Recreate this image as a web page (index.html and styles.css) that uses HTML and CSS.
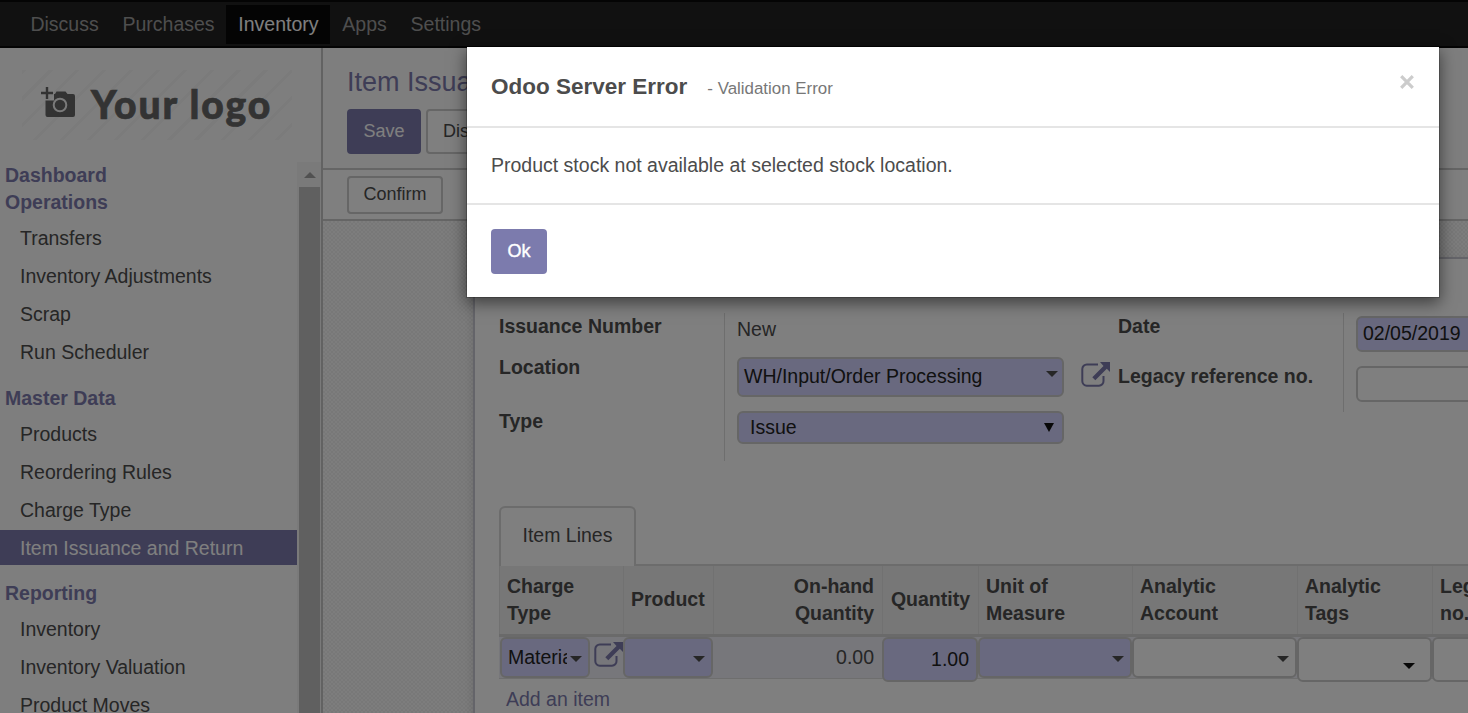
FILE: index.html
```html
<!DOCTYPE html>
<html lang="en">
<head>
<meta charset="utf-8">
<title>Item Issuance - Odoo</title>
<link rel="stylesheet" href="styles.css">
</head>
<body>
<svg class="defs" width="0" height="0">
  <symbol id="external" viewBox="0 0 29 26">
    <path d="M17 2.500H6A4.500 4.500 0 0 0 1.300 7v12A4.500 4.500 0 0 0 6 23.700h12A4.500 4.500 0 0 0 22.500 19v-5" fill="none" stroke="currentColor" stroke-width="2"/>
    <path d="M19 0h10v10l-3.200-3.200L14.300 18.300l-3-3L22.500 4z" fill="currentColor"/>
  </symbol>
</svg>
<div class="app">
  <nav class="topbar">
    <a class="menu">Discuss</a><a class="menu">Purchases</a><a class="menu active">Inventory</a><a class="menu">Apps</a><a class="menu">Settings</a>
  </nav>
  <div class="body">
    <aside class="sidebar">
      <div class="logo">
        <svg class="camera" viewBox="0 0 34 31" width="34" height="31">
          <path d="M6 0v12M0 6h12" stroke="#666" stroke-width="2.400"/>
          <path d="M14 7l1.500-2.500h9L26.500 7H32q2 0 2 2v19q0 2-2 2H6.500q-2 0-2-2V13.500H13V7z" fill="#666"/>
          <circle cx="19" cy="18" r="6.300" fill="#666" stroke="#f5f5f5" stroke-width="2"/>
        </svg>
        <span class="logo-text">Your logo</span>
      </div>
      <div class="side-scroll">
        <div class="side-menu">
          <h4 class="low">Dashboard</h4>
          <h4 class="low">Operations</h4>
          <ul class="low"><li>Transfers</li><li>Inventory Adjustments</li><li>Scrap</li><li>Run Scheduler</li></ul>
          <h4 class="low">Master Data</h4>
          <ul class="low"><li>Products</li><li>Reordering Rules</li><li>Charge Type</li><li class="selected">Item Issuance and Return</li></ul>
          <h4>Reporting</h4>
          <ul><li>Inventory</li><li>Inventory Valuation</li><li>Product Moves</li></ul>
        </div>
        <div class="scrollbar"><i class="up"></i><i class="thumb"></i></div>
      </div>
    </aside>
    <main class="content">
      <header class="panel">
        <h1>Item Issuance and Return</h1>
        <div class="buttons"><button class="btn primary">Save</button><button class="btn">Discard</button></div>
      </header>
      <div class="statusbar"><button class="btn small">Confirm</button></div>
      <div class="sheet-bg">
        <section class="sheet">
          <div class="groups">
            <div class="group g1">
              <div class="labels"><b>Issuance Number</b><b>Location</b><b>Type</b></div>
              <div class="values">
                <span class="static">New</span>
                <div class="field loc req">WH/Input/Order Processing<i class="caret"></i></div>
                <div class="field type req">Issue<i class="tri"></i></div>
              </div>
              <svg class="ext" width="29" height="26"><use href="#external"/></svg>
            </div>
            <div class="group g2">
              <div class="labels"><b>Date</b><b>Legacy reference no.</b></div>
              <div class="values">
                <div class="field date req">02/05/2019</div>
                <div class="field date"></div>
              </div>
            </div>
          </div>
          <div class="tabs"><div class="tab">Item Lines</div></div>
          <div class="row head">
            <div>Charge<br>Type</div><div class="single">Product</div><div class="num">On-hand<br>Quantity</div><div class="num single">Quantity</div><div>Unit of<br>Measure</div><div>Analytic<br>Account</div><div>Analytic<br>Tags</div><div>Legacy reference<br>no.</div>
          </div>
          <div class="row line">
            <div class="charge"><div class="field req"><span class="clip">Material</span><i class="caret"></i></div><svg width="29" height="26"><use href="#external"/></svg></div>
            <div class="field req"><i class="caret"></i></div>
            <div class="onhand">0.00</div>
            <div class="field req tall qty">1.00</div>
            <div class="field req"><i class="caret"></i></div>
            <div class="field"><i class="caret"></i></div>
            <div class="field tall tags"><i class="caret dark"></i></div>
            <div class="field tall"></div>
          </div>
          <a class="add">Add an item</a>
        </section>
      </div>
    </main>
  </div>
</div>
<div class="backdrop"></div>
<div class="modal">
  <div class="modal-head"><span class="title">Odoo Server Error</span><span class="sub">- Validation Error</span>
    <svg class="close" width="14" height="14" viewBox="0 0 14 14"><path d="M1.200 1.200l11.600 11.600M12.800 1.200L1.200 12.800" stroke="#ccc" stroke-width="3.200"/></svg></div>
  <div class="modal-body">Product stock not available at selected stock location.</div>
  <div class="modal-foot"><button class="ok">Ok</button></div>
</div>
</body>
</html>
```

FILE: styles.css
```css
* { box-sizing: border-box; }
body { margin: 0; height: 713px; overflow: hidden; position: relative; font: 19.5px/27px "Liberation Sans", Arial, sans-serif; color: #4c4c4c; background: #fff; }
h1, h4, ul { margin: 0; padding: 0; }
li { list-style: none; }
button { font: inherit; white-space: nowrap; }
.defs { display: block; }
.app { height: 713px; overflow: hidden; }
.topbar { height: 48px; background: #222; border-top: 2px solid #080808; border-bottom: 2px solid #080808; padding: 3px 0 0 18.5px; display: flex; }
.menu { height: 39px; line-height: 38px; padding: 0 11.9px; color: #9d9d9d; }
.menu.active { background: #080808; color: #fff; }
.body { display: flex; height: 665px; }
.sidebar { width: 323px; flex: none; background: #fcfcfc; border-right: 2px solid #c4c4c4; }
.logo { margin: 22px 0 0 22px; width: 270px; height: 70px; padding: 17px 0 0 19px; display: flex; gap: 16px; background: repeating-linear-gradient(135deg, #f7f7f7 0 3px, #fcfcfc 3px 19px); }
.camera { flex: none; }
.logo-text { font: 900 39px/34px Lato, sans-serif; color: #666; white-space: nowrap; letter-spacing: 1.9px; -webkit-text-stroke: .7px #666; }
.side-scroll { display: flex; height: 551px; margin-top: 22px; overflow: hidden; }
.side-menu { width: 297px; margin-top: -1px; }
.side-menu h4 { font-size: 19.5px; line-height: 27px; height: 27px; padding-left: 5px; color: #7c7bad; }
.side-menu h4.low { line-height: 29px; }
.side-menu ul { margin: 5px 0 15px; display: flex; flex-direction: column; gap: 3px; }
.side-menu li { height: 35px; line-height: 35px; padding-left: 20px; }
.side-menu .low li { line-height: 37px; }
.side-menu li.selected { background: #7c7bad; color: #fff; }
.scrollbar { width: 24px; background: #f5f5f5; padding: 10px 1px 0 2px; }
.up { display: block; width: 0; margin: 0 0 9px 5px; border: 6px solid transparent; border-top: 0; border-bottom-color: #a3a3a3; }
.thumb { display: block; height: 530px; background: #c1c1c1; }
.content { flex: 1; min-width: 0; display: flex; flex-direction: column; }
.panel { height: 122px; background: #fcfcfc; border-bottom: 2px solid #cacaca; padding: 17px 24px 0; }
.panel h1 { font-size: 27px; font-weight: 400; line-height: 34px; color: #7c7bad; }
.buttons { display: flex; gap: 5px; margin-top: 10px; }
.btn { height: 45px; border: 2px solid #ccc; border-radius: 4px; background: #fff; color: #4c4c4c; font-size: 18px; line-height: 20px; padding: 0 15px 1px; }
.btn.primary { border-color: #7c7bad; background: #7c7bad; color: #fff; width: 74px; padding: 0 0 1px; }
.btn.small { height: 38px; width: 96px; padding: 0 0 2px; }
.statusbar { height: 51px; border-bottom: 2px solid #cacaca; background: #fff; padding: 6px 24px; }
.sheet-bg { flex: 1; padding: 36px 0 0 150px; background: repeating-conic-gradient(#f0f0f0 0 25%, #fafafa 0 50%) 0 0 / 4px 4px; overflow: hidden; }
.sheet { width: 1400px; height: 700px; background: #fff; border: 2px solid #c8c8d3; box-shadow: 0 5px 20px -15px #000; padding: 54px 24px 0; }
.groups { display: flex; height: 193px; }
.group { display: flex; align-items: flex-start; }
.g1 { width: 619px; }
.labels { width: 226px; display: flex; flex-direction: column; border-right: 1px solid #ddd; }
.g1 .labels { height: 148px; }
.g2 .labels { height: 99px; }
.g1 b:nth-child(2) { margin-top: 14px; }
.g1 b:nth-child(3) { margin-top: 27px; }
.g2 b:nth-child(2) { margin-top: 23px; }
.values { padding-left: 12px; }
.static { display: block; height: 44px; line-height: 32px; }
.field { height: 41px; border: 2px solid #ccc; border-radius: 6px; background: #fff; color: #222; display: flex; align-items: center; white-space: nowrap; }
.req { background: #d2d2ff; }
.loc { width: 327px; height: 40px; padding: 0 4px 2px 5px; justify-content: space-between; }
.loc .caret { margin-top: -5px; }
.type { width: 327px; height: 33px; margin-top: 14px; padding: 0 8px 0 11px; justify-content: space-between; }
.date { width: 300px; height: 36px; margin: 3px 0 14px; padding: 0 0 2px 5px; }
.ext { margin: 49px 0 0 17px; }
.ext, .charge svg { color: #7c7bad; flex: none; }
.caret { display: block; flex: none; border: 6px solid transparent; border-bottom: 0; border-top-color: #4c4c4c; }
.caret.dark { border-top-color: #111; }
.tri { border: 5px solid transparent; border-bottom: 0; border-top: 9px solid #111; }
.tabs { height: 60px; border-bottom: 2px solid #d8d8d8; }
.tab { width: 137px; height: 60px; border: 2px solid #d8d8d8; border-bottom: 0; border-radius: 6px 6px 0 0; background: #fff; padding: 14px 0 0 21.5px; }
.row { display: grid; grid-template-columns: 124px 90px 169px 96px 154px 165px 135px 240px; }
.head { height: 71px; background: #eee; border-bottom: 3px solid #d5d5d5; font-weight: 700; line-height: 27px; }
.head > div { border-left: 1px solid #e2e2e2; padding: 0 7px; display: flex; align-items: center; white-space: nowrap; }
.head > .single { padding-bottom: 2px; }
.head > .num { justify-content: flex-end; text-align: right; padding-right: 8px; }
.line { height: 42px; background: #eeeef6; border-bottom: 1px solid #ddd; }
.line .field { justify-content: flex-end; padding: 3px 6px 0 6px; }
.line .tall { height: 45px; }
.line .qty { padding: 0 7px 1px 0; }
.line .tags { padding: 12px 15px 0 0; }
.charge { display: flex; gap: 4px; padding-left: 1px; }
.charge .field { width: 90px; }
.charge svg { margin-top: 5px; }
.clip { width: 59px; overflow: hidden; margin: -3px 3px 0 0; }
.onhand { text-align: right; padding-right: 8px; line-height: 41px; }
.add { color: #7c7bad; display: block; margin: 7px 0 0 7px; }
.backdrop { position: absolute; inset: 0; background: rgba(0,0,0,.5); }
.modal { position: absolute; left: 466px; top: 46px; width: 974px; height: 252px; background: #fff; background-clip: padding-box; border: 1px solid rgba(0,0,0,.2); box-shadow: 0 5px 15px rgba(0,0,0,.5); }
.modal-head { height: 81px; border-bottom: 2px solid #e5e5e5; padding: 0 25.5px 0 24px; display: flex; align-items: baseline; line-height: 79px; }
.title { font-size: 22.5px; font-weight: 700; }
.sub { font-size: 16.9px; color: #777; margin-left: 20px; }
.close { margin-left: auto; align-self: flex-start; margin-top: 28px; }
.modal-body { height: 77px; border-bottom: 2px solid #e5e5e5; padding-left: 24px; line-height: 75px; }
.modal-foot { padding: 24px; }
.ok { display: block; width: 56px; height: 45px; border: 0; border-radius: 4px; background: #7c7bad; color: #fff; font-size: 18px; padding: 0 0 1px; -webkit-text-stroke: .4px #fff; }
```
